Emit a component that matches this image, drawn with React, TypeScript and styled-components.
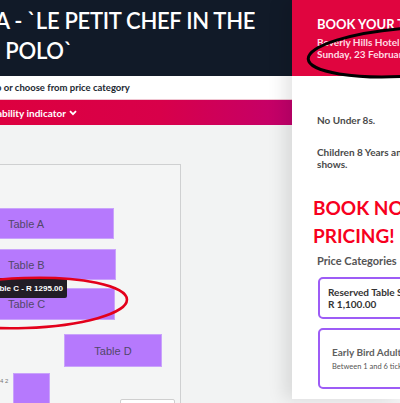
import React from "react";
import styled, { createGlobalStyle } from "styled-components";

const GlobalStyle = createGlobalStyle`
  html, body {
    margin: 0;
    padding: 0;
    background: #f2f2f3;
  }
  body {
    font-family: "Lato", "Open Sans", sans-serif;
  }
`;

const Page = styled.div`
  position: relative;
  width: 400px;
  height: 403px;
  overflow: hidden;
  display: grid;
  grid-template-columns: 292px 108px;
`;

const LeftColumn = styled.div`
  display: flex;
  flex-direction: column;
  min-width: 0;
  overflow: hidden;
  background: #f2f3f3;
`;

const EventHeader = styled.div`
  height: 76px;
  box-sizing: border-box;
  padding-top: 6px;
  background: #111a28;
  flex-shrink: 0;
`;

const EventTitle = styled.h1`
  margin: 0 0 0 -5px;
  color: #ffffff;
  font-size: 22px;
  font-weight: 600;
  line-height: 30px;
  letter-spacing: -0.3px;
  white-space: pre;
`;

const HintRow = styled.div`
  height: 23px;
  background: #ffffff;
  display: flex;
  align-items: center;
  flex-shrink: 0;
  border-bottom: 1px solid #f0c6d2;
`;

const HintText = styled.span`
  margin-left: -4px;
  font-size: 9.5px;
  font-weight: 700;
  color: #222831;
  white-space: nowrap;
`;

const AvailabilityBar = styled.div`
  height: 25px;
  background: linear-gradient(90deg, #dd003f 0%, #d8004a 55%, #c2006c 100%);
  display: flex;
  align-items: center;
  gap: 3px;
  flex-shrink: 0;
  color: #ffffff;
  font-size: 10px;
  font-weight: 700;
  white-space: nowrap;
`;

const AvailabilityLabel = styled.span`
  margin-left: -3px;
`;

const MapArea = styled.div`
  flex: 1;
  overflow: hidden;
  padding-top: 39px;
`;

const SeatCanvas = styled.div`
  position: relative;
  margin-left: -20px;
  width: 199px;
  height: 300px;
  background: #f4f5f5;
  border: 1px solid #cfd0d1;
`;

const TableBlock = styled.div<{ $centered?: boolean }>`
  position: absolute;
  box-sizing: border-box;
  background: #b679fd;
  border: 1px solid #c9a3fb;
  display: flex;
  align-items: center;
  justify-content: ${(p) => (p.$centered ? "center" : "flex-start")};
  padding-left: ${(p) => (p.$centered ? "0" : "26px")};
  color: #52476a;
  font-family: "Liberation Sans", Arial, sans-serif;
  font-size: 11px;
`;

const EmptyBox = styled.div`
  position: absolute;
  background: #ffffff;
  border: 1px solid #cfcfcf;
  border-radius: 2px;
`;

const TinyLabel = styled.span`
  position: absolute;
  font-family: "Liberation Sans", Arial, sans-serif;
  font-size: 6px;
  color: #777;
`;

const Tooltip = styled.div`
  position: absolute;
  background: #221d26;
  color: #ffffff;
  font-family: "Liberation Sans", Arial, sans-serif;
  font-size: 8px;
  font-weight: 700;
  padding: 0 4px 0 5px;
  height: 20px;
  display: flex;
  align-items: center;
  white-space: nowrap;
  border-radius: 2px;
  z-index: 2;
`;

const RightPanel = styled.aside`
  position: relative;
  z-index: 1;
  height: 399px;
  background: #ffffff;
  box-shadow: -8px 0 16px rgba(0, 0, 0, 0.1);
  overflow: hidden;
  display: flex;
  flex-direction: column;
  white-space: nowrap;
`;

const BookingHeader = styled.div`
  height: 76px;
  background: #e0053f;
  padding: 16px 0 0 25px;
  box-sizing: border-box;
  display: flex;
  flex-direction: column;
`;

const BookingTitle = styled.div`
  color: #ffffff;
  font-size: 13px;
  font-weight: 700;
  line-height: 16px;
  margin-bottom: 4px;
`;

const BookingMeta = styled.div`
  color: #ffdbe3;
  font-size: 10px;
  font-weight: 700;
  line-height: 12px;
`;

const PanelBody = styled.div`
  padding: 38px 0 0 25px;
  display: flex;
  flex-direction: column;
`;

const Note = styled.p`
  margin: 0 0 20px;
  font-size: 10px;
  font-weight: 700;
  line-height: 12px;
  color: #4a4a4a;
`;

const PromoHeading = styled.h2`
  margin: 4px 0 4px -4px;
  color: #f7001e;
  font-size: 19px;
  font-weight: 700;
  line-height: 28px;
`;

const SectionLabel = styled.div`
  font-size: 11px;
  font-weight: 700;
  line-height: 13px;
  color: #555;
  margin-bottom: 10px;
`;

const PriceCard = styled.div<{ $tall?: boolean }>`
  box-sizing: border-box;
  width: 200px;
  height: ${(p) => (p.$tall ? "61px" : "42px")};
  margin: 0 0 9px 1px;
  border: 2px solid #9d5cf6;
  border-radius: 5px;
  padding: ${(p) => (p.$tall ? "0 0 0 12px" : "0 0 0 8px")};
  display: flex;
  flex-direction: column;
  justify-content: center;
`;

const CardName = styled.div<{ $muted?: boolean }>`
  font-size: 10px;
  font-weight: 700;
  color: ${(p) => (p.$muted ? "#5f5f5f" : "#333")};
  line-height: 12px;
`;

const CardPrice = styled.div`
  font-size: 10px;
  font-weight: 700;
  color: #333;
  line-height: 12px;
`;

const CardSub = styled.div`
  margin-top: 4px;
  font-size: 7.5px;
  color: #555;
  line-height: 10px;
`;

const Annotations = styled.svg`
  position: absolute;
  inset: 0;
  z-index: 5;
  pointer-events: none;
`;

const Chevron = () => (
  <svg width="8" height="6" viewBox="0 0 8 6">
    <path d="M1 1.2 L4 4.2 L7 1.2" fill="none" stroke="#fff" strokeWidth="1.8" />
  </svg>
);

export default function App() {
  return (
    <>
      <GlobalStyle />
      <Page>
        <LeftColumn>
          <EventHeader>
            <EventTitle>{"A - `LE PETIT CHEF IN THE\n  POLO`"}</EventTitle>
          </EventHeader>
          <HintRow>
            <HintText>p or choose from price category</HintText>
          </HintRow>
          <AvailabilityBar>
            <AvailabilityLabel>ability indicator</AvailabilityLabel>
            <Chevron />
          </AvailabilityBar>
          <MapArea>
            <SeatCanvas>
              <TableBlock style={{ left: 0, top: 43, width: 133, height: 31 }}>Table A</TableBlock>
              <TableBlock style={{ left: 0, top: 84, width: 135, height: 31 }}>Table B</TableBlock>
              <TableBlock style={{ left: 0, top: 123, width: 134, height: 32 }}>Table C</TableBlock>
              <TableBlock $centered style={{ left: 83, top: 169, width: 98, height: 33 }}>
                Table D
              </TableBlock>
              <TableBlock style={{ left: 32, top: 208, width: 37, height: 40 }} />
              <TinyLabel style={{ left: 19, top: 213 }}>4 2</TinyLabel>
              <EmptyBox style={{ left: 139, top: 234, width: 53, height: 30 }} />
              <Tooltip style={{ right: 113, top: 113 }}>Table C - R 1295.00</Tooltip>
            </SeatCanvas>
          </MapArea>
        </LeftColumn>

        <RightPanel>
          <BookingHeader>
            <BookingTitle>BOOK YOUR TICKETS</BookingTitle>
            <BookingMeta>Beverly Hills Hotel - Umhlanga</BookingMeta>
            <BookingMeta>Sunday, 23 February 2025</BookingMeta>
          </BookingHeader>
          <PanelBody>
            <Note>No Under 8s.</Note>
            <Note>
              Children 8 Years and older welcome at all
              <br />
              shows.
            </Note>
            <PromoHeading>
              BOOK NOW FOR
              <br />
              PRICING!
            </PromoHeading>
            <SectionLabel>Price Categories</SectionLabel>
            <PriceCard>
              <CardName>Reserved Table Seating</CardName>
              <CardPrice>R 1,100.00</CardPrice>
            </PriceCard>
            <PriceCard $tall>
              <CardName $muted>Early Bird Adult Ticket</CardName>
              <CardSub>Between 1 and 6 tickets</CardSub>
            </PriceCard>
          </PanelBody>
        </RightPanel>

        <Annotations width="400" height="403" viewBox="0 0 400 403">
          <ellipse
            cx="25"
            cy="303"
            rx="102"
            ry="25"
            fill="none"
            stroke="#e3001b"
            strokeWidth="2.6"
            transform="rotate(-2 25 303)"
          />
          <ellipse
            cx="410"
            cy="52"
            rx="102"
            ry="24"
            fill="none"
            stroke="#000"
            strokeWidth="3"
            transform="rotate(-4 410 52)"
          />
        </Annotations>
      </Page>
    </>
  );
}
